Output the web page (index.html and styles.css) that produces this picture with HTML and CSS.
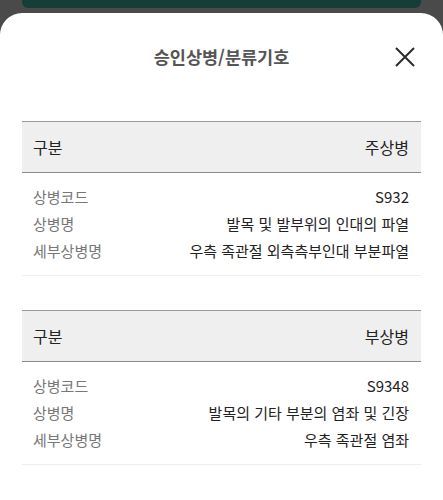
FILE: index.html
```html
<!DOCTYPE html>
<html lang="ko">
<head>
  <meta charset="UTF-8">
  <meta name="viewport" content="width=device-width, initial-scale=1.0">
  <title>승인상병/분류기호</title>
  <link rel="stylesheet" href="styles.css">
</head>
<body>
  <div class="behind-bar"></div>

  <div class="sheet">
    <div class="sheet-header">
      <span></span>
      <h2 class="sheet-title">승인상병/분류기호</h2>
      <button type="button" class="close-btn" aria-label="닫기">
        <svg width="22" height="22" viewBox="0 0 22 22">
          <path d="M2 2 L20 20 M20 2 L2 20" stroke="#2b2b2b" stroke-width="2" fill="none"/>
        </svg>
      </button>
    </div>

    <div class="table">
      <div class="table-head">
        <span>구분</span>
        <span>주상병</span>
      </div>
      <div class="table-body">
        <div class="row"><span class="label">상병코드</span><span class="value">S932</span></div>
        <div class="row"><span class="label">상병명</span><span class="value">발목 및 발부위의 인대의 파열</span></div>
        <div class="row"><span class="label">세부상병명</span><span class="value">우측 족관절 외측측부인대 부분파열</span></div>
      </div>
    </div>

    <div class="table">
      <div class="table-head">
        <span>구분</span>
        <span>부상병</span>
      </div>
      <div class="table-body">
        <div class="row"><span class="label">상병코드</span><span class="value">S9348</span></div>
        <div class="row"><span class="label">상병명</span><span class="value">발목의 기타 부분의 염좌 및 긴장</span></div>
        <div class="row"><span class="label">세부상병명</span><span class="value">우측 족관절 염좌</span></div>
      </div>
    </div>
  </div>
</body>
</html>
```

FILE: styles.css
```css
html, body {
  margin: 0;
  padding: 0;
  height: 100%;
}

body {
  font-family: "Noto Sans CJK KR", "Noto Sans", sans-serif;
  background-color: #4a4a4a;
  color: #222;
  overflow: hidden;
}

.behind-bar {
  height: 8px;
  margin: 0 22px;
  background-color: #173d39;
  border-radius: 0 0 6px 6px;
}

.sheet {
  box-sizing: border-box;
  margin-top: 5px;
  background-color: white;
  border-radius: 22px 22px 0 0;
  height: 487px;
  padding: 32px 22px 0;
}

.sheet-header {
  display: grid;
  grid-template-columns: 1fr auto 1fr;
  align-items: center;
  height: 24px;
}

.sheet-title {
  margin: 0;
  font-size: 17.5px;
  font-weight: bold;
  color: #555;
  line-height: 24px;
}

.close-btn {
  justify-self: end;
  margin-right: 5px;
  padding: 0;
  background: none;
  border: none;
  width: 22px;
  height: 22px;
  cursor: pointer;
}

.table {
  margin-top: 52px;
}

.table + .table {
  margin-top: 34px;
}

.table-head {
  display: flex;
  justify-content: space-between;
  align-items: center;
  height: 50px;
  padding: 0 12px 0 11px;
  background-color: #efefef;
  border-top: 1px solid #9a9a9a;
  border-bottom: 1px solid #8a8a8a;
  font-size: 16px;
  color: #222;
}

.table-body {
  padding: 10px 12px 11px 11px;
  border-bottom: 1px solid #eeeeee;
}

.row {
  display: flex;
  justify-content: space-between;
  line-height: 27px;
  font-size: 15px;
}

.label {
  color: #777;
}

.value {
  color: #222;
}
```
